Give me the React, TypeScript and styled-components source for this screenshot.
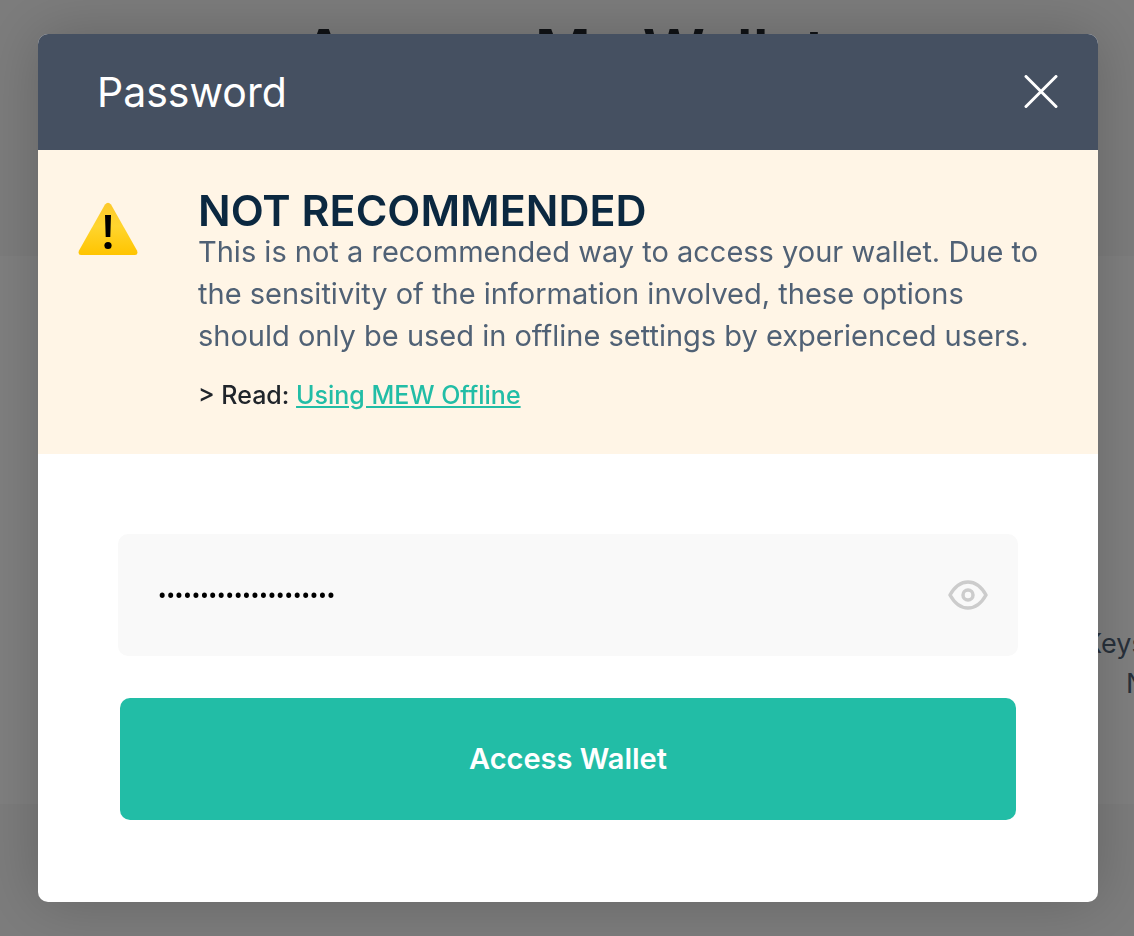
import React, { useState } from "react";
import styled, { createGlobalStyle } from "styled-components";

const GlobalStyle = createGlobalStyle`
  *, *::before, *::after { box-sizing: border-box; }
  body {
    margin: 0;
    background: #f9f9f9;
    font-family: Inter, "Open Sans", sans-serif;
  }
  h1, h2, h3, p { margin: 0; }
`;

const Page = styled.main`
  min-height: 100vh;
  overflow: hidden;
`;

const PageHeader = styled.header`
  height: 256px;
  padding: 9px 6px 0 0;
  text-align: center;
`;

const PageTitle = styled.h1`
  color: #20252b;
  font-size: 61px;
  font-weight: 600;
  line-height: 84px;
`;

const Options = styled.section`
  display: flex;
  justify-content: flex-end;
  height: 548px;
  padding-top: 368px;
  background: #ffffff;
`;

const OptionText = styled.p`
  width: 50px;
  color: #506175;
  font-size: 27px;
  line-height: 40px;
  white-space: nowrap;
`;

const OptionLine = styled.span<{ $indent: number }>`
  display: block;
  padding-left: ${({ $indent }) => $indent}px;
`;

const Overlay = styled.div`
  position: fixed;
  inset: 0;
  overflow: auto;
  padding: 34px 36px 34px 38px;
  background: rgba(0, 0, 0, 0.5);
`;

const Dialog = styled.section`
  overflow: hidden;
  border-radius: 10px;
  background: #ffffff;
  box-shadow: 0 0 60px rgba(0, 0, 0, 0.2);
`;

const DialogHeader = styled.header`
  display: flex;
  align-items: center;
  justify-content: space-between;
  height: 116px;
  padding: 0 40px 0 59px;
  background: #455061;
`;

const DialogTitle = styled.h2`
  color: #ffffff;
  font-size: 41px;
  font-weight: 400;
  line-height: 48px;
`;

const IconButton = styled.button`
  display: flex;
  padding: 0;
  border: 0;
  background: none;
  cursor: pointer;
`;

const Warning = styled.div`
  display: flex;
  gap: 60px;
  padding: 40px 40px 41px;
  background: #fff5e6;
`;

const WarningIcon = styled.svg`
  flex: none;
  margin-top: 12px;
`;

const WarningTitle = styled.h3`
  color: #0b2840;
  font-size: 43px;
  font-weight: 600;
  line-height: 41px;
`;

const WarningText = styled.p`
  color: #506175;
  font-size: 29px;
  line-height: 42px;
`;

const ReadMore = styled.p`
  margin-top: 20px;
  color: #20252b;
  font-size: 25px;
  font-weight: 500;
  line-height: 36px;
`;

const ReadLink = styled.a`
  color: #22bda6;
  text-decoration: underline;
`;

const Form = styled.form`
  display: flex;
  flex-direction: column;
  gap: 42px;
  padding: 80px 80px 82px;
`;

const PasswordField = styled.label`
  display: flex;
  align-items: center;
  height: 122px;
  padding: 0 30px 0 40px;
  border-radius: 10px;
  background: #f9f9f9;
`;

const PasswordInput = styled.input`
  flex: 1;
  min-width: 0;
  padding: 4px 0 0;
  border: 0;
  outline: none;
  background: none;
  color: #000000;
  font-family: Roboto, sans-serif;
  font-size: 25px;
  line-height: 36px;
`;

const SubmitButton = styled.button`
  height: 122px;
  margin: 0 2px;
  padding: 0 0 2px;
  border: 0;
  border-radius: 10px;
  background: #22bda6;
  color: #ffffff;
  font-family: inherit;
  font-size: 29px;
  font-weight: 600;
  cursor: pointer;
`;

export default function App() {
  const [password, setPassword] = useState("correct-horse-battery");
  const [visible, setVisible] = useState(false);

  return (
    <>
      <GlobalStyle />
      <Page>
        <PageHeader>
          <PageTitle>Access My Wallet</PageTitle>
        </PageHeader>
        <Options>
          <OptionText>
            <OptionLine $indent={0}>Keys</OptionLine>
            <OptionLine $indent={42}>N</OptionLine>
          </OptionText>
        </Options>
      </Page>
      <Overlay>
        <Dialog role="dialog" aria-modal="true" aria-labelledby="dialog-title">
          <DialogHeader>
            <DialogTitle id="dialog-title">Password</DialogTitle>
            <IconButton type="button" aria-label="Close">
              <svg width="34" height="34" viewBox="0 0 34 34" fill="none" stroke="#ffffff" strokeWidth="3">
                <path d="M2 1.500 32 31.500M32 1.500 2 31.500" strokeLinecap="round" />
              </svg>
            </IconButton>
          </DialogHeader>
          <Warning>
            <WarningIcon width="60" height="54" viewBox="0 0 60 54" aria-hidden="true">
              <defs>
                <linearGradient id="amber" x1="0" y1="0" x2="0" y2="1">
                  <stop offset="0" stopColor="#fcc92c" />
                  <stop offset="0.45" stopColor="#ffd52e" />
                  <stop offset="1" stopColor="#ffc400" />
                </linearGradient>
              </defs>
              <path
                d="M27 2.5Q30-.8 33 2.5L59 48.500Q60.500 53 57 53H3Q-.5 53 1 48.500Z"
                fill="url(#amber)"
              />
              <path d="M27 13H33L32.300 35H27.700Z" fill="#000000" />
              <circle cx="30" cy="43.500" r="3.600" fill="#000000" />
            </WarningIcon>
            <div>
              <WarningTitle>NOT RECOMMENDED</WarningTitle>
              <WarningText>
                This is not a recommended way to access your wallet. Due to the sensitivity of the
                information involved, these options should only be used in offline settings by
                experienced users.
              </WarningText>
              <ReadMore>
                &gt; Read: <ReadLink href="#offline">Using MEW Offline</ReadLink>
              </ReadMore>
            </div>
          </Warning>
          <Form onSubmit={(event) => event.preventDefault()}>
            <PasswordField>
              <PasswordInput
                type={visible ? "text" : "password"}
                aria-label="Password"
                value={password}
                onChange={(event) => setPassword(event.target.value)}
              />
              <IconButton
                type="button"
                aria-label="Show password"
                aria-pressed={visible}
                onClick={() => setVisible(!visible)}
              >
                <svg width="40" height="32" viewBox="0 0 40 32" fill="none" stroke="#cccccc" strokeWidth="3.500">
                  <path
                    d="M2 16C6.500 8 12.500 3 20 3S33.500 8 38 16C33.500 24 27.500 29 20 29S6.500 24 2 16Z"
                    strokeLinejoin="round"
                  />
                  <circle cx="20" cy="16" r="5" />
                </svg>
              </IconButton>
            </PasswordField>
            <SubmitButton type="submit">Access Wallet</SubmitButton>
          </Form>
        </Dialog>
      </Overlay>
    </>
  );
}
